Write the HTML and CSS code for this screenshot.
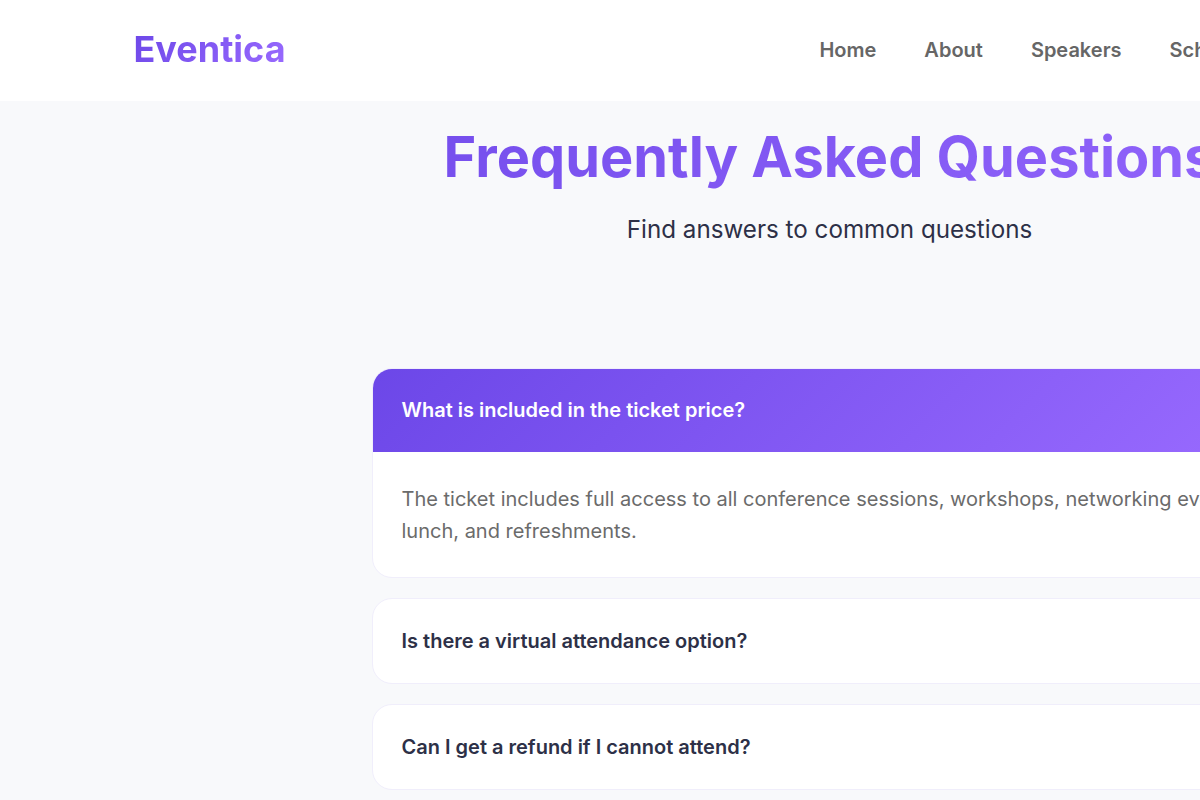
FILE: index.html
```html
<!DOCTYPE html>
<html lang="en">
<head>
<meta charset="utf-8">
<title>Eventica FAQ</title>
<link rel="stylesheet" href="styles.css">
</head>
<body>
<div class="page">
  <header class="site-header">
    <div class="header-inner">
      <a class="logo" href="#">Eventica</a>
      <nav class="nav">
        <a href="#">Home</a>
        <a href="#">About</a>
        <a href="#">Speakers</a>
        <a href="#">Schedule</a>
        <a href="#">Tickets</a>
        <a href="#">FAQ</a>
      </nav>
    </div>
  </header>
  <main class="faq">
    <div class="faq-head">
      <h1 class="faq-title">Frequently Asked Questions</h1>
      <p class="faq-sub">Find answers to common questions</p>
    </div>
    <div class="faq-list">
      <div class="faq-item">
        <div class="faq-q faq-q-open">What is included in the ticket price?</div>
        <div class="faq-a">The ticket includes full access to all conference sessions, workshops, networking events, lunch, and refreshments.</div>
      </div>
      <div class="faq-item">
        <div class="faq-q">Is there a virtual attendance option?</div>
      </div>
      <div class="faq-item">
        <div class="faq-q">Can I get a refund if I cannot attend?</div>
      </div>
    </div>
  </main>
</div>
</body>
</html>
```
FILE: styles.css
```css
html, body {
  margin: 0;
  padding: 0;
  height: 800px;
  overflow: hidden;
  background: #f8f9fb;
}
.page {
  width: 1659px;
  font-family: "Inter", "Liberation Sans", sans-serif;
}
.site-header {
  background: #fff;
  box-sizing: border-box;
  height: 101px;
  padding-bottom: 2px;
  display: flex;
  justify-content: center;
}
.header-inner {
  width: 1392px;
  display: flex;
  align-items: center;
  justify-content: space-between;
}
.logo {
  margin-bottom: 2px;
  font-size: 36px;
  font-weight: 700;
  text-decoration: none;
  background: linear-gradient(135deg, #6c47e8, #9a6bff);
  -webkit-background-clip: text;
  background-clip: text;
  color: transparent;
}
.nav {
  display: flex;
  gap: 48px;
  margin-right: 59.5px;
}
.nav a {
  font-size: 20px;
  font-weight: 600;
  color: #666;
  text-decoration: none;
}
.faq {
  display: flex;
  flex-direction: column;
  align-items: center;
}
.faq-head {
  width: 1392px;
  text-align: center;
  padding-top: 20px;
  margin-bottom: 122px;
}
.faq-title {
  margin: 0;
  font-size: 55.9px;
  line-height: 72px;
  font-weight: 700;
  background: linear-gradient(135deg, #6c47e8, #9a6bff);
  -webkit-background-clip: text;
  background-clip: text;
  color: transparent;
}
.faq-sub {
  margin: 21px 0 0;
  font-size: 24.2px;
  line-height: 32px;
  font-weight: 400;
  color: #2d3047;
}
.faq-list {
  width: 916px;
  display: flex;
  flex-direction: column;
  gap: 20px;
}
.faq-item {
  background: #fff;
  border: 1px solid #f0eefb;
  border-radius: 20px;
  overflow: hidden;
}
.faq-q {
  padding: 29px 29px;
  font-size: 20px;
  line-height: 26px;
  font-weight: 600;
  color: #2d3047;
}
.faq-q-open {
  padding: 28px 29px 29px;
  color: #fff;
  background: linear-gradient(135deg, #6c47e8, #9a6bff);
}
.faq-a {
  padding: 31px 29px 30px;
  font-size: 20px;
  line-height: 32px;
  color: #6b6b6b;
}
```
